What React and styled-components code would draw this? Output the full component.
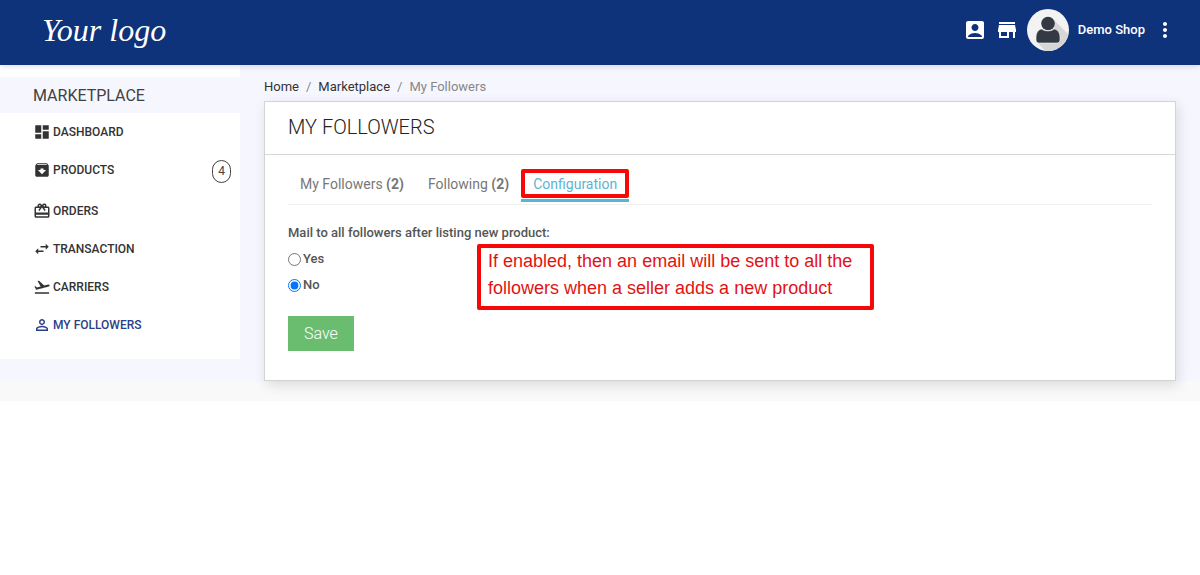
import { useState } from 'react';
import styled, { createGlobalStyle } from 'styled-components';
import {
  MdAccountBox,
  MdArchive,
  MdCardGiftcard,
  MdDashboard,
  MdFlightTakeoff,
  MdMoreVert,
  MdPersonOutline,
  MdStore,
  MdSwapHoriz,
} from 'react-icons/md';

const menu = [
  { id: 1, text: 'Dashboard', icon: <MdDashboard /> },
  { id: 2, text: 'Products', icon: <MdArchive />, count: 4 },
  { id: 3, text: 'Orders', icon: <MdCardGiftcard /> },
  { id: 4, text: 'Transaction', icon: <MdSwapHoriz /> },
  { id: 5, text: 'Carriers', icon: <MdFlightTakeoff /> },
  { id: 6, text: 'My Followers', icon: <MdPersonOutline />, active: true },
];

const tabs = [
  { id: 'followers', text: 'My Followers', count: 2 },
  { id: 'following', text: 'Following', count: 2 },
  { id: 'configuration', text: 'Configuration', marked: true },
];

const Header = () => {
  return (
    <HeaderBar>
      <Logo href="#">Your logo</Logo>
      <HeaderNav>
        <HeaderLink href="#" aria-label="Profile">
          <MdAccountBox />
        </HeaderLink>
        <HeaderLink href="#" aria-label="Shop">
          <MdStore />
        </HeaderLink>
        <Account href="#">
          <Avatar viewBox="0 0 42 42" aria-hidden="true">
            <defs>
              <clipPath id="avatar-clip">
                <circle cx="21" cy="21" r="21" />
              </clipPath>
            </defs>
            <g clipPath="url(#avatar-clip)">
              <rect width="42" height="42" fill="#f3f3f3" />
              <path d="M26 10 L42 26 V42 H18 L10 33 L24 24 Z" fill="#d6d6d6" />
            </g>
            <circle cx="21" cy="14.5" r="6.8" fill="#343943" />
            <path
              d="M15 20 C17 22.5 25 22.5 27 20 C31 20.5 33 24 33 29 V31 Q33 34 30 34 H12 Q9 34 9 31 V29 C9 24 11 20.5 15 20 Z"
              fill="#343943"
              stroke="#f3f3f3"
              strokeWidth="0.6"
            />
          </Avatar>
          Demo Shop
        </Account>
        <MoreButton type="button" aria-label="More">
          <MdMoreVert />
        </MoreButton>
      </HeaderNav>
    </HeaderBar>
  );
};

const Sidebar = () => {
  return (
    <Aside>
      <h2>Marketplace</h2>
      <ul>
        {menu.map(({ id, text, icon, count, active }) => {
          return (
            <li key={id}>
              <MenuLink href="#" $active={active}>
                {icon}
                {text}
              </MenuLink>
              {count && <Count>{count}</Count>}
            </li>
          );
        })}
      </ul>
    </Aside>
  );
};

const App = () => {
  const [tab, setTab] = useState('configuration');
  const [mail, setMail] = useState('no');

  return (
    <>
      <GlobalStyle />
      <Header />
      <Page>
        <Sidebar />
        <Content>
          <Breadcrumb aria-label="Breadcrumb">
            <a href="#">Home</a>
            <span>/</span>
            <a href="#">Marketplace</a>
            <span>/</span>
            <span>My Followers</span>
          </Breadcrumb>
          <Card>
            <CardTitle>My Followers</CardTitle>
            <CardBody>
              <Tabs role="tablist">
                {tabs.map(({ id, text, count, marked }) => {
                  return (
                    <Tab
                      key={id}
                      type="button"
                      role="tab"
                      aria-selected={tab === id}
                      $active={tab === id}
                      onClick={() => setTab(id)}
                    >
                      {text} {count && <b>({count})</b>}
                      {marked && <Mark />}
                    </Tab>
                  );
                })}
              </Tabs>
              <Form onSubmit={(e) => e.preventDefault()}>
                <fieldset>
                  <legend>Mail to all followers after listing new product:</legend>
                  <label>
                    <input
                      type="radio"
                      name="mail"
                      checked={mail === 'yes'}
                      onChange={() => setMail('yes')}
                    />
                    Yes
                  </label>
                  <label>
                    <input
                      type="radio"
                      name="mail"
                      checked={mail === 'no'}
                      onChange={() => setMail('no')}
                    />
                    No
                  </label>
                </fieldset>
                <SaveButton type="submit">Save</SaveButton>
                <Note>
                  If enabled, then an email will be sent to all the
                  <br />
                  followers when a seller adds a new product
                </Note>
              </Form>
            </CardBody>
          </Card>
        </Content>
      </Page>
      <Footer />
    </>
  );
};

const GlobalStyle = createGlobalStyle`
  * {
    box-sizing: border-box;
    margin: 0;
    padding: 0;
  }
  body {
    background: #fff;
    color: #414141;
    font-family: Roboto, 'Liberation Sans', sans-serif;
    font-size: 13px;
    line-height: 20px;
  }
  a {
    color: inherit;
    text-decoration: none;
  }
  ul {
    list-style: none;
  }
  button,
  input {
    font: inherit;
  }
`;

const HeaderBar = styled.header`
  position: relative;
  display: flex;
  align-items: center;
  justify-content: space-between;
  height: 65px;
  padding: 0 23px 5px 42px;
  background: #0f337b;
  box-shadow: 0 1px 6px rgba(0, 0, 0, 0.15);
  color: #fff;
`;

const Logo = styled.a`
  font-family: 'Liberation Serif', cursive;
  font-size: 32px;
  font-style: italic;
  line-height: 40px;
`;

const HeaderNav = styled.nav`
  display: flex;
  align-items: center;
`;

const HeaderLink = styled.a`
  display: flex;
  margin-right: 8px;
  font-size: 24px;
`;

const Account = styled.a`
  display: flex;
  align-items: center;
  gap: 9px;
  font-weight: 500;
`;

const Avatar = styled.svg`
  width: 42px;
  height: 42px;
`;

const MoreButton = styled.button`
  display: flex;
  margin-left: 8px;
  border: none;
  background: none;
  color: #fff;
  font-size: 24px;
  cursor: pointer;
`;

const Page = styled.div`
  display: flex;
  align-items: flex-start;
  background: #f6f6fe;
`;

const Aside = styled.aside`
  flex: 0 0 240px;
  padding: 12px 0 15px;
  background: #fff;
  h2 {
    padding: 9px 33px 7px;
    background: #f6f6fe;
    font-size: 16px;
    font-weight: 400;
    text-transform: uppercase;
  }
  li {
    display: flex;
    align-items: flex-start;
    justify-content: space-between;
    padding: 9px 9px 9px 33px;
  }
`;

const MenuLink = styled.a`
  display: flex;
  align-items: center;
  gap: 2px;
  color: ${({ $active }) => ($active ? '#2b3f86' : '#333')};
  font-size: 12px;
  font-weight: 500;
  text-transform: uppercase;
  svg {
    font-size: 18px;
  }
`;

const Count = styled.span`
  width: 19px;
  border: 1px solid #414141;
  border-radius: 10px;
  font-size: 12px;
  line-height: 21px;
  text-align: center;
`;

const Content = styled.main`
  flex: 1;
  min-width: 0;
  padding: 12px 24px 0;
`;

const Breadcrumb = styled.nav`
  display: flex;
  gap: 7px;
  margin-bottom: 4px;
  color: #878787;
  a {
    color: #333;
  }
`;

const Card = styled.section`
  position: relative;
  border: 1px solid #d3d3d6;
  background: #fff;
  box-shadow: 2px 4px 12px rgba(0, 0, 0, 0.12);
`;

const CardTitle = styled.h1`
  padding: 11px 23px 13px;
  border-bottom: 1px solid #d6d6d6;
  font-size: 20px;
  font-weight: 300;
  line-height: 28px;
  text-transform: uppercase;
  color: #232323;
`;

const CardBody = styled.div`
  padding: 14px 23px 29px;
`;

const Tabs = styled.div`
  display: flex;
  padding-bottom: 2px;
  border-bottom: 1px solid #f0f0f0;
`;

const Tab = styled.button`
  position: relative;
  padding: 5px 12px;
  border: none;
  border-bottom: 3px solid ${({ $active }) => ($active ? '#5cb4d3' : 'transparent')};
  background: none;
  color: ${({ $active }) => ($active ? '#5cb4d3' : '#777')};
  font-size: 14px;
  cursor: pointer;
`;

const Mark = styled.span`
  position: absolute;
  inset: 0 0 1px;
  border: 4px solid #f60808;
  border-radius: 2px;
`;

const Form = styled.form`
  position: relative;
  padding-top: 18px;
  color: #555;
  font-weight: 500;
  fieldset {
    border: none;
    margin-bottom: 18px;
  }
  legend {
    margin-bottom: 3px;
  }
  label {
    display: flex;
    align-items: center;
    gap: 2px;
    padding: 3px 0;
  }
  input {
    width: 13px;
    height: 13px;
  }
`;

const SaveButton = styled.button`
  padding: 8px 16px 7px;
  border: none;
  background: #6abd6e;
  color: #fff;
  font-size: 16px;
  font-weight: 300;
  cursor: pointer;
`;

const Note = styled.p`
  position: absolute;
  top: 39px;
  left: 189px;
  padding: 0 18px 4px 7px;
  border: 4px solid #f60808;
  border-radius: 2px;
  color: #e31212;
  font-family: 'Liberation Sans', sans-serif;
  font-size: 18px;
  font-weight: 400;
  line-height: 27px;
`;

const Footer = styled.footer`
  height: 20px;
  background: #f9f9f9;
`;

export default App;
